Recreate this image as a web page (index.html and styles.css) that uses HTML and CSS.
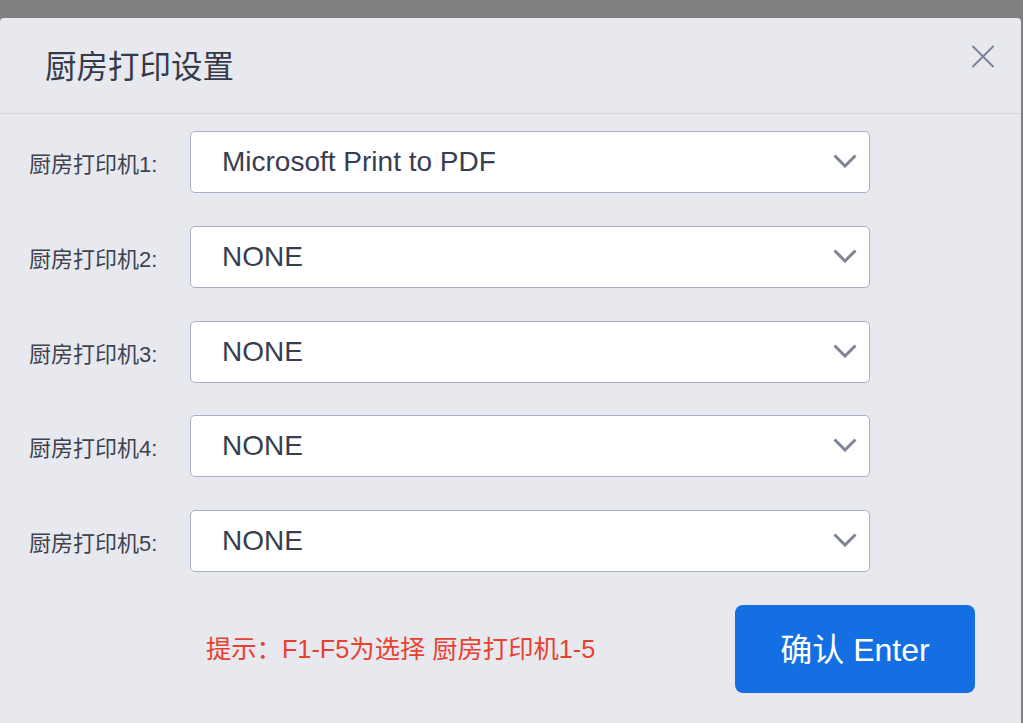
FILE: index.html
```html
<!DOCTYPE html>
<html lang="zh-CN">
<head>
    <meta charset="UTF-8">
    <meta name="viewport" content="width=device-width, initial-scale=1.0">
    <title>厨房打印设置</title>
    <link rel="stylesheet" href="styles.css">
</head>
<body>
    <div class="dialog">
        <div class="dialog-header">
            <h2 class="dialog-title">厨房打印设置</h2>
            <svg class="close-icon" viewBox="0 0 24 24" xmlns="http://www.w3.org/2000/svg">
                <path d="M1 1 L23 23 M23 1 L1 23"></path>
            </svg>
        </div>

        <div class="dialog-body">
            <div class="printer-row">
                <label class="printer-label">厨房打印机1:</label>
                <div class="printer-select">
                    <span>Microsoft Print to PDF</span>
                    <svg class="chevron" viewBox="0 0 24 14" xmlns="http://www.w3.org/2000/svg"><path d="M1.5 1.5 L12 12 L22.5 1.5"></path></svg>
                </div>
            </div>
            <div class="printer-row">
                <label class="printer-label">厨房打印机2:</label>
                <div class="printer-select">
                    <span>NONE</span>
                    <svg class="chevron" viewBox="0 0 24 14" xmlns="http://www.w3.org/2000/svg"><path d="M1.5 1.5 L12 12 L22.5 1.5"></path></svg>
                </div>
            </div>
            <div class="printer-row">
                <label class="printer-label">厨房打印机3:</label>
                <div class="printer-select">
                    <span>NONE</span>
                    <svg class="chevron" viewBox="0 0 24 14" xmlns="http://www.w3.org/2000/svg"><path d="M1.5 1.5 L12 12 L22.5 1.5"></path></svg>
                </div>
            </div>
            <div class="printer-row">
                <label class="printer-label">厨房打印机4:</label>
                <div class="printer-select">
                    <span>NONE</span>
                    <svg class="chevron" viewBox="0 0 24 14" xmlns="http://www.w3.org/2000/svg"><path d="M1.5 1.5 L12 12 L22.5 1.5"></path></svg>
                </div>
            </div>
            <div class="printer-row">
                <label class="printer-label">厨房打印机5:</label>
                <div class="printer-select">
                    <span>NONE</span>
                    <svg class="chevron" viewBox="0 0 24 14" xmlns="http://www.w3.org/2000/svg"><path d="M1.5 1.5 L12 12 L22.5 1.5"></path></svg>
                </div>
            </div>
        </div>

        <div class="dialog-footer">
            <p class="hint">提示：F1-F5为选择 厨房打印机1-5</p>
            <button class="confirm-btn">确认 Enter</button>
        </div>
    </div>
</body>
</html>
```

FILE: styles.css
```css
body {
    margin: 0;
    padding: 0;
    background-color: #808080;
    font-family: 'Liberation Sans', 'Noto Sans CJK SC', sans-serif;
    overflow: hidden;
}
.dialog {
    width: 1021px;
    height: 705px;
    margin-top: 18px;
    background-color: #e8e9ee;
    border-radius: 4px 4px 0 0;
    box-sizing: border-box;
}
.dialog-header {
    height: 96px;
    border-bottom: 1px solid #d6d8de;
    box-sizing: border-box;
    display: flex;
    align-items: center;
    justify-content: space-between;
    padding: 0 26px 4px 45px;
}
.dialog-title {
    margin: 0;
    font-size: 31.5px;
    font-weight: normal;
    color: #343a4a;
}
.close-icon {
    width: 24px;
    height: 23px;
    fill: none;
    stroke: #7a8196;
    stroke-width: 2;
    margin-top: -14px;
}
.dialog-body {
    padding: 17px 0 0 29px;
    display: flex;
    flex-direction: column;
    gap: 32.8px;
}
.printer-row {
    display: grid;
    grid-template-columns: 161px 680px;
    align-items: center;
}
.printer-label {
    font-size: 22px;
    color: #3d4250;
}
.printer-select {
    height: 62px;
    box-sizing: border-box;
    background-color: #fff;
    border: 1px solid #a9afc3;
    border-radius: 5px;
    display: flex;
    align-items: center;
    justify-content: space-between;
    padding: 0 12px 0 31px;
    font-size: 28px;
    color: #383d50;
}
.chevron {
    width: 24px;
    height: 14px;
    fill: none;
    stroke: #7f8595;
    stroke-width: 3;
    margin-top: -2px;
}
.dialog-footer {
    display: flex;
    align-items: center;
    justify-content: space-between;
    padding: 33px 46px 0 206px;
}
.hint {
    margin: 0 0 4px;
    font-size: 25.3px;
    color: #e8412f;
}
.confirm-btn {
    width: 240px;
    height: 88px;
    border: none;
    border-radius: 8px;
    background-color: #136fe2;
    color: #fff;
    font-family: 'Liberation Sans', 'Noto Sans CJK SC', sans-serif;
    font-size: 32px;
    padding: 0 0 4px;
    cursor: pointer;
}
```
